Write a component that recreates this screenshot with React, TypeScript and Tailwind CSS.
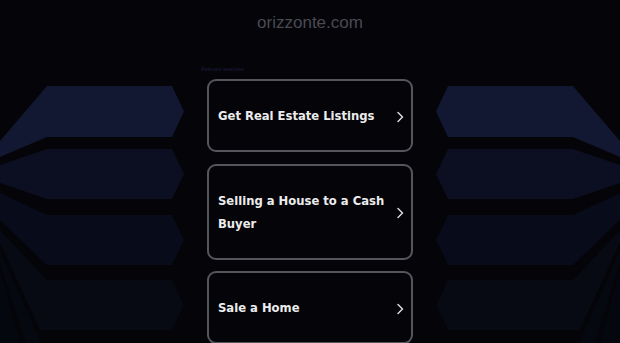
import React from 'react';

const shapes = [
  { fill: '#121831', points: '0,141 47,86 172,86 184,111.5 172,137 47,137 0,157' },
  { fill: '#0b0f21', points: '0,165 47,149 172,149 184,174 172,199 47,199 0,183' },
  { fill: '#080b19', points: '0,193 47,215 172,215 184,240 172,265 47,265 0,220' },
  { fill: '#070913', points: '0,230 47,280 172,280 184,305 172,330 40,330 0,243' },
  { fill: '#060810', points: '0,250 42,345 26,345 0,263' },
  { fill: '#05070e', points: '0,270 21,345 0,345' },
];

function Fan({ mirror }: { mirror?: boolean }) {
  return (
    <svg width="201" height="283" viewBox="0 60 201 283" className="block shrink-0">
      <g transform={mirror ? 'translate(201,0) scale(-1,1)' : undefined}>
        {shapes.map((s, i) => (
          <polygon key={i} points={s.points} fill={s.fill} />
        ))}
      </g>
    </svg>
  );
}

function Chevron() {
  return (
    <svg width="8" height="12" viewBox="0 0 8 12" className="shrink-0">
      <path d="M2 1.5 L6.5 6 L2 10.5" fill="none" stroke="#dadada" strokeWidth="1.5" strokeLinecap="round" strokeLinejoin="round" />
    </svg>
  );
}

const searches = ['Get Real Estate Listings', 'Selling a House to a Cash Buyer', 'Sale a Home'];

export default function App() {
  return (
    <div className="w-[620px] h-[343px] overflow-hidden bg-[#040409] font-['Liberation_Sans',Arial,sans-serif]">
      <div className="h-[60px] pt-[10px] text-center text-[17px] text-[#4a4a52]">orizzonte.com</div>
      <div className="flex">
        <Fan />
        <div className="w-[218px] shrink-0 pt-[6px]">
          <div className="h-[6px] text-[5.2px] leading-[6px] text-[#1d1d3a]">Relevant searches</div>
          <div className="mx-[6px] mt-[7px] flex flex-col gap-[11.5px]">
            {searches.map((q) => (
              <div
                key={q}
                className="flex items-center gap-[6px] rounded-[9px] border-2 border-[#55555c] pt-[24px] pb-[22px] pl-[9px] pr-[7px]"
              >
                <span className="flex-1 font-['DejaVu_Sans',sans-serif] text-[11.6px] font-bold leading-[23px] text-[#ececec]">
                  {q}
                </span>
                <Chevron />
              </div>
            ))}
          </div>
        </div>
        <Fan mirror />
      </div>
    </div>
  );
}
